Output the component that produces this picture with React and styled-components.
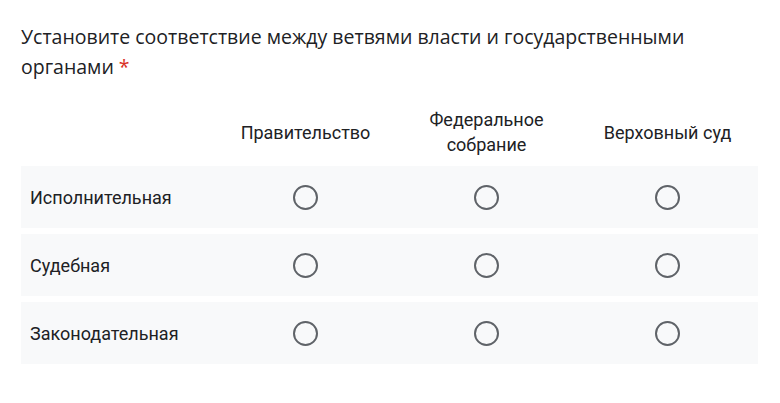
import React from "react";
import styled, { createGlobalStyle } from "styled-components";

const GlobalStyle = createGlobalStyle`
  body {
    margin: 0;
    background: #fff;
    font-family: Roboto, "Noto Sans", Arial, sans-serif;
    color: #202124;
  }
`;

const Page = styled.div`
  padding: 22px 0 0 21px;
  width: 736px;
`;

const Title = styled.div`
  font-family: "Open Sans", "Noto Sans", sans-serif;
  font-size: 19.5px;
  line-height: 30px;
  color: #202124;
`;

const Required = styled.span`
  color: #d93025;
`;

const Grid = styled.div`
  margin-top: 14px;
  display: grid;
  grid-template-columns: 194px repeat(3, 181px);
  row-gap: 6px;
`;

const HeaderCell = styled.div`
  height: 64px;
  display: flex;
  align-items: center;
  justify-content: center;
  text-align: center;
  padding: 8px 10px 0;
  font-size: 18px;
  line-height: 25px;
  box-sizing: border-box;
`;

const Row = styled.div`
  display: contents;
`;

const LabelCell = styled.div`
  height: 62px;
  background: #f8f9fa;
  display: flex;
  align-items: center;
  padding-left: 9px;
  font-size: 18px;
  box-sizing: border-box;
`;

const RadioCell = styled.div`
  height: 62px;
  background: #f8f9fa;
  display: flex;
  align-items: center;
  justify-content: center;
`;

const Radio = styled.div`
  width: 25px;
  height: 25px;
  border: 2px solid #5f6368;
  border-radius: 50%;
  box-sizing: border-box;
`;

const columns = ["Правительство", "Федеральное собрание", "Верховный суд"];
const rows = ["Исполнительная", "Судебная", "Законодательная"];

export default function App() {
  return (
    <Page>
      <GlobalStyle />
      <Title>
        Установите соответствие между ветвями власти и государственными органами <Required>*</Required>
      </Title>
      <Grid>
        <HeaderCell />
        {columns.map((c) => (
          <HeaderCell key={c}>{c}</HeaderCell>
        ))}
        {rows.map((r) => (
          <Row key={r}>
            <LabelCell>{r}</LabelCell>
            {columns.map((c) => (
              <RadioCell key={c}>
                <Radio />
              </RadioCell>
            ))}
          </Row>
        ))}
      </Grid>
    </Page>
  );
}
